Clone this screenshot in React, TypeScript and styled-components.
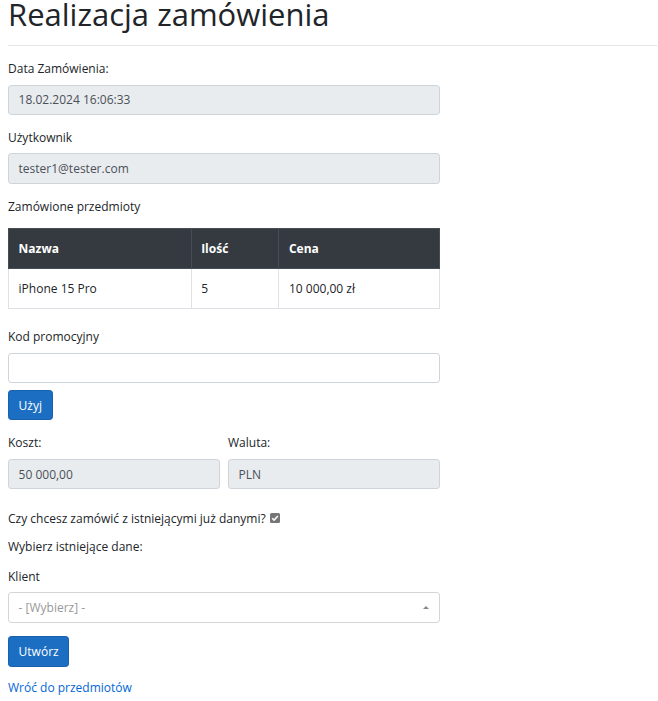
import React from "react";
import styled, { createGlobalStyle } from "styled-components";

const Global = createGlobalStyle`
  html, body { margin: 0; padding: 0; background: #fff; }
  body {
    font-family: "Open Sans", "Noto Sans", "Liberation Sans", sans-serif;
    font-size: 12px;
    line-height: 19.2px;
    color: #212529;
  }
  * { box-sizing: border-box; }
`;

const Page = styled.main`
  padding: 0 1px 0 8px;
`;

const Title = styled.h1`
  margin: 0 0 17px;
  font-size: 31px;
  line-height: 28px;
  font-weight: 500;
  color: #212529;
`;

const Rule = styled.hr`
  margin: 0 0 13px;
  border: 0;
  border-top: 1px solid rgba(0, 0, 0, 0.1);
`;

const Form = styled.div`
  width: 432px;
  display: flex;
  flex-direction: column;
`;

const Group = styled.div<{ $mb?: number }>`
  display: flex;
  flex-direction: column;
  margin-bottom: ${(p) => p.$mb ?? 12.8}px;
`;

const Label = styled.label<{ $mb?: number }>`
  display: block;
  margin-bottom: ${(p) => p.$mb ?? 6.4}px;
`;

const Field = styled.div<{ $disabled?: boolean }>`
  height: 30.4px;
  padding: 4.6px 9.6px;
  border: 1px solid #ced4da;
  border-radius: 3.2px;
  background: ${(p) => (p.$disabled ? "#e9ecef" : "#fff")};
  color: #495057;
  line-height: 19.2px;
`;

const Table = styled.table`
  width: 432px;
  border-collapse: collapse;
  margin-bottom: 18.5px;
`;

const Th = styled.th<{ $w: number }>`
  width: ${(p) => p.$w}px;
  height: 39.4px;
  padding: 0 9.6px;
  text-align: left;
  font-weight: 700;
  color: #fff;
  background: #343a40;
  border: 1px solid #454d55;
`;

const Td = styled.td`
  height: 40.4px;
  padding: 0 9.6px;
  border: 1px solid #dee2e6;
`;

const Button = styled.button`
  align-self: flex-start;
  height: 30.4px;
  padding: 0 9.6px;
  font: inherit;
  line-height: 19.2px;
  color: #fff;
  background: #1b6ec2;
  border: 1px solid #1861ac;
  border-radius: 3.2px;
`;

const Row = styled.div`
  display: grid;
  grid-template-columns: 1fr 1fr;
  column-gap: 8px;
  margin-top: 13px;
  margin-bottom: 20px;
`;

const CheckLine = styled.div`
  display: flex;
  align-items: center;
  gap: 4px;
  margin-bottom: 8px;
`;

const Check = styled.span`
  display: inline-block;
  width: 10px;
  height: 10px;
  line-height: 0;
  margin-top: -1px;
`;

const Plain = styled.div<{ $mb?: number }>`
  margin-bottom: ${(p) => p.$mb ?? 0}px;
`;

const Select = styled.div`
  position: relative;
  height: 30.4px;
  padding: 4.6px 9.6px;
  border: 1px solid #d5d5d5;
  border-radius: 3.2px;
  color: #999;
  background: #fff;
`;

const Arrow = styled.span`
  position: absolute;
  right: 10px;
  top: 13px;
  width: 0;
  height: 0;
  border-left: 3px solid transparent;
  border-right: 3px solid transparent;
  border-bottom: 3px solid #888;
`;

const Link = styled.a`
  align-self: flex-start;
  color: #0366d6;
  text-decoration: none;
  margin-top: 11.5px;
`;

export default function App() {
  return (
    <>
      <Global />
      <Page>
        <Title>Realizacja zamówienia</Title>
        <Rule />
        <Form>
          <Group>
            <Label>Data Zamówienia:</Label>
            <Field $disabled>18.02.2024 16:06:33</Field>
          </Group>
          <Group>
            <Label>Użytkownik</Label>
            <Field $disabled>tester1@tester.com</Field>
          </Group>
          <Label $mb={12.4}>Zamówione przedmioty</Label>
          <Table>
            <thead>
              <tr>
                <Th $w={183}>Nazwa</Th>
                <Th $w={88}>Ilość</Th>
                <Th $w={161}>Cena</Th>
              </tr>
            </thead>
            <tbody>
              <tr>
                <Td>iPhone 15 Pro</Td>
                <Td>5</Td>
                <Td>10 000,00 zł</Td>
              </tr>
            </tbody>
          </Table>
          <Group $mb={6.5}>
            <Label>Kod promocyjny</Label>
            <Field />
          </Group>
          <Button>Użyj</Button>
          <Row>
            <Group $mb={0}>
              <Label>Koszt:</Label>
              <Field $disabled>50 000,00</Field>
            </Group>
            <Group $mb={0}>
              <Label>Waluta:</Label>
              <Field $disabled>PLN</Field>
            </Group>
          </Row>
          <CheckLine>
            <span>Czy chcesz zamówić z istniejącymi już danymi?</span>
            <Check>
              <svg width="10" height="10" viewBox="0 0 10 10">
                <rect x="0" y="0" width="10" height="10" rx="1.5" fill="#767676" />
                <path d="M2.2 5.2 L4.1 7.1 L7.9 2.9" stroke="#fff" strokeWidth="1.5" fill="none" />
              </svg>
            </Check>
          </CheckLine>
          <Plain $mb={11}>Wybierz istniejące dane:</Plain>
          <Group $mb={13.5}>
            <Label>Klient</Label>
            <Select>
              - [Wybierz] -
              <Arrow />
            </Select>
          </Group>
          <Button>Utwórz</Button>
          <Link href="#">Wróć do przedmiotów</Link>
        </Form>
      </Page>
    </>
  );
}
